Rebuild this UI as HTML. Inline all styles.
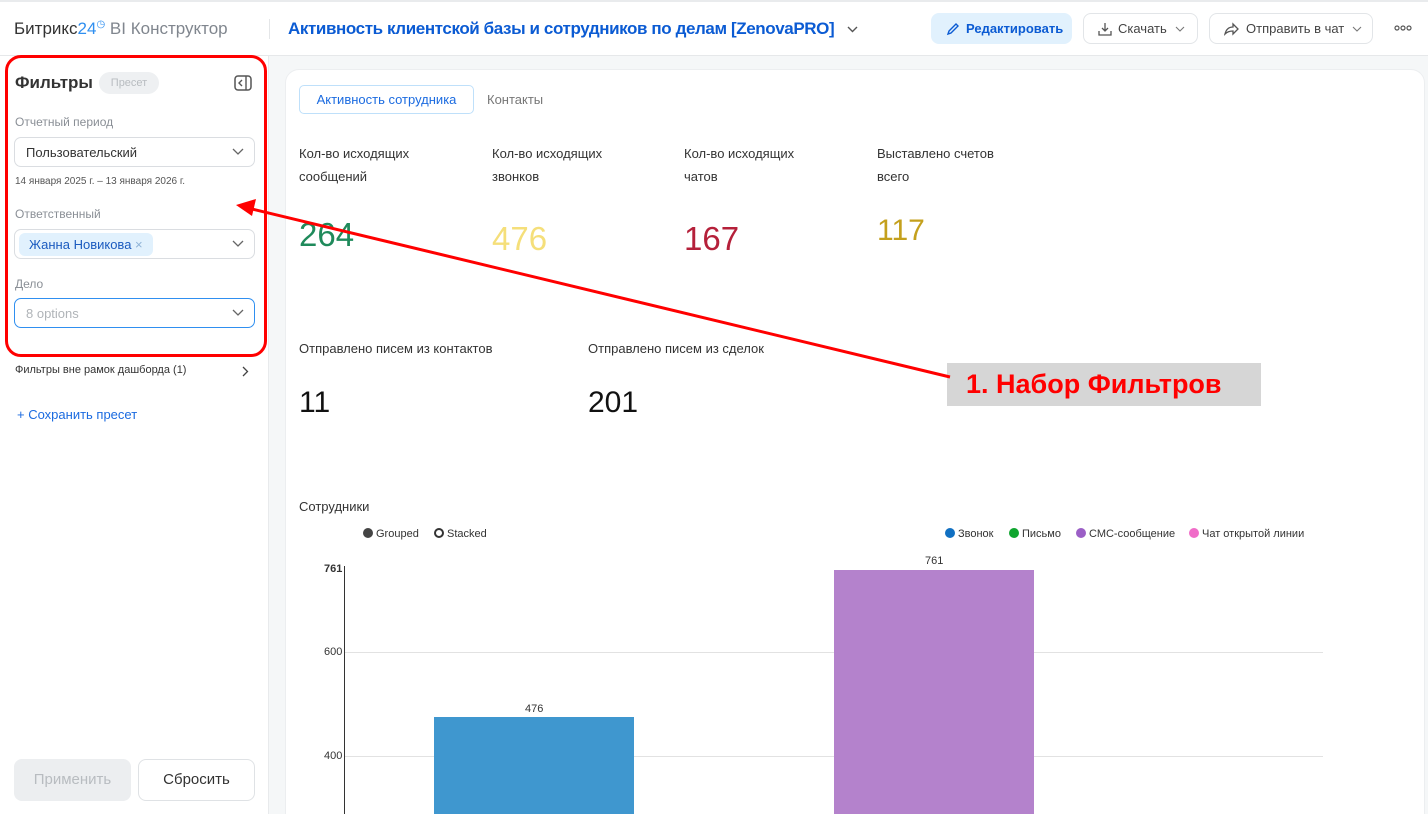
<!DOCTYPE html>
<html><head><meta charset="utf-8"><style>
*{box-sizing:border-box;margin:0;padding:0}
html,body{width:1428px;height:814px;overflow:hidden}
body{font-family:"Liberation Sans","Noto Sans CJK SC",sans-serif;background:#f5f7f8;position:relative;color:#333}
.abs{position:absolute}
.hdr{left:0;top:0;width:1428px;height:56px;background:#fff;border-bottom:1px solid #e6e8ea;border-top:2px solid #e9ebed}
.btn{position:absolute;top:13px;height:31px;border:1px solid #e2e5e8;border-radius:8px;background:#fff;font-size:13px;color:#444;display:flex;align-items:center;padding-left:14px}
.side{left:0;top:56px;width:269px;height:758px;background:#fff;border-right:1px solid #e8eaec}
.lbl{font-size:12px;color:#8a8f96;position:absolute;left:15px}
.sel{position:absolute;left:14px;width:241px;height:30px;border:1px solid #dadde1;border-radius:7px;font-size:13px;color:#333;padding-left:11px;display:flex;align-items:center}
.chev{position:absolute;right:10px;top:10px}
.card{left:285px;top:69px;width:1140px;height:760px;background:#fff;border-radius:14px;border:1px solid #eceef0}
.kt{font-size:13px;color:#333;line-height:23px;position:absolute}
.kv{font-size:33px;position:absolute}
.sm{font-size:11px;color:#333;position:absolute;font-family:"Liberation Sans",sans-serif}
.dot{display:inline-block;width:10px;height:10px;border-radius:50%;vertical-align:-1px;margin-right:3px}
</style></head><body>
<div class="abs hdr"></div>
<div class="abs" style="left:14px;top:19px;font-size:17px;color:#333">Битрикс<span style="color:#2f8ff0">24</span><span style="color:#2f8ff0;font-size:10px;vertical-align:top">◷</span> <span style="color:#80868e">BI Конструктор</span></div>
<div class="abs" style="left:269px;top:19px;width:1px;height:20px;background:#e4e6e8"></div>
<div class="abs" style="left:288px;top:19px;font-size:17px;font-weight:bold;color:#0b5bd3;letter-spacing:-0.4px">Активность клиентской базы и сотрудников по делам [ZenovaPRO]</div>
<svg class="abs" style="left:847px;top:26px" width="11" height="7"><path d="M1 1l4.5 4.5L10 1" fill="none" stroke="#555" stroke-width="1.4"/></svg>
<div class="btn" style="left:931px;width:141px;background:#e1f1fd;border-color:#e1f1fd;color:#0b5bd3;font-weight:bold">
<svg width="14" height="14" viewBox="0 0 14 14" style="margin-right:6px"><path d="M2 12 L3 9 L10 2 L12 4 L5 11 Z" fill="none" stroke="#0b5bd3" stroke-width="1.4"/></svg>Редактировать</div>
<div class="btn" style="left:1083px;width:115px"><svg width="14" height="14" viewBox="0 0 14 14" style="margin-right:6px"><path d="M7 1v8M4 6l3 3 3-3M1 9v4h12V9" fill="none" stroke="#555" stroke-width="1.3"/></svg>Скачать <svg width="10" height="6" style="margin-left:8px"><path d="M1 1l4 4 4-4" fill="none" stroke="#777" stroke-width="1.1"/></svg></div>
<div class="btn" style="left:1209px;width:164px"><svg width="16" height="14" viewBox="0 0 16 14" style="margin-right:6px"><path d="M9 2l5 5-5 5V9C5 9 3 10 1 12c1-4 3-7 8-7z" fill="none" stroke="#555" stroke-width="1.3"/></svg>Отправить в чат <svg width="10" height="6" style="margin-left:8px"><path d="M1 1l4 4 4-4" fill="none" stroke="#777" stroke-width="1.1"/></svg></div>
<svg class="abs" style="left:1394px;top:25px" width="18" height="6"><circle cx="3" cy="3" r="2" fill="none" stroke="#555" stroke-width="1.2"/><circle cx="9" cy="3" r="2" fill="none" stroke="#555" stroke-width="1.2"/><circle cx="15" cy="3" r="2" fill="none" stroke="#555" stroke-width="1.2"/></svg>

<div class="abs side"></div>
<div class="abs" style="left:15px;top:73px;font-size:17px;font-weight:bold;color:#333">Фильтры</div>
<div class="abs" style="left:99px;top:72px;width:60px;height:22px;border-radius:11px;background:#eef0f2;font-size:11px;color:#b8bcc0;text-align:center;line-height:22px">Пресет</div>
<svg class="abs" style="left:234px;top:75px" width="18" height="16"><rect x="1" y="1" width="16" height="14" rx="3" fill="none" stroke="#555" stroke-width="1.5"/><path d="M12 1v14M8 5l-3 3 3 3" fill="none" stroke="#555" stroke-width="1.4"/></svg>
<div class="lbl" style="top:115px">Отчетный период</div>
<div class="sel" style="top:137px">Пользовательский<svg class="chev" width="12" height="8"><path d="M1 1l5 5 5-5" fill="none" stroke="#666" stroke-width="1.3"/></svg></div>
<div class="abs" style="left:15px;top:176px;font-size:10px;color:#555">14 января 2025 г. – 13 января 2026 г.</div>
<div class="lbl" style="top:207px">Ответственный</div>
<div class="sel" style="top:229px;padding-left:4px"><span style="background:#e1f1fd;color:#1b5bbf;border-radius:6px;padding:4px 10px;font-size:13px">Жанна Новикова <span style="color:#8fb3d6">×</span></span><svg class="chev" width="12" height="8"><path d="M1 1l5 5 5-5" fill="none" stroke="#666" stroke-width="1.3"/></svg></div>
<div class="lbl" style="top:277px">Дело</div>
<div class="sel" style="top:298px;border-color:#2f8ff0;color:#b0b4b8">8 options<svg class="chev" width="12" height="8"><path d="M1 1l5 5 5-5" fill="none" stroke="#666" stroke-width="1.3"/></svg></div>
<div class="abs" style="left:5px;top:55px;width:262px;height:302px;border:3px solid #f00;border-radius:16px"></div>
<div class="abs" style="left:15px;top:364px;font-size:11px;color:#333">Фильтры вне рамок дашборда (1)</div>
<svg class="abs" style="left:242px;top:366px" width="7" height="11"><path d="M1 1l4.5 4.5L1 10" fill="none" stroke="#444" stroke-width="1.3"/></svg>
<div class="abs" style="left:17px;top:407px;font-size:13px;color:#1b6be0">+ Сохранить пресет</div>
<div class="abs" style="left:14px;top:759px;width:117px;height:42px;border-radius:8px;background:#eceef0;color:#b8bcc0;font-size:15px;text-align:center;line-height:42px">Применить</div>
<div class="abs" style="left:138px;top:759px;width:117px;height:42px;border-radius:8px;border:1px solid #dfe2e5;color:#333;font-size:15px;text-align:center;line-height:40px">Сбросить</div>

<div class="abs card"></div>
<div class="abs" style="left:299px;top:85px;width:175px;height:29px;border:1px solid #bfe0fa;border-radius:5px;color:#1b6be0;font-size:13px;text-align:center;line-height:27px">Активность сотрудника</div>
<div class="abs" style="left:487px;top:92px;font-size:13px;color:#777">Контакты</div>

<div class="kt" style="left:299px;top:142px">Кол-во исходящих<br>сообщений</div>
<div class="kt" style="left:492px;top:142px">Кол-во исходящих<br>звонков</div>
<div class="kt" style="left:684px;top:142px">Кол-во исходящих<br>чатов</div>
<div class="kt" style="left:877px;top:142px">Выставлено счетов<br>всего</div>
<div class="kv" style="left:299px;top:216px;color:#1f8a5b">264</div>
<div class="kv" style="left:492px;top:220px;color:#f5df7a">476</div>
<div class="kv" style="left:684px;top:220px;color:#b5203a">167</div>
<div class="kv" style="left:877px;top:214px;color:#c4a01d;font-size:30px">117</div>
<div class="kt" style="left:299px;top:337px">Отправлено писем из контактов</div>
<div class="kt" style="left:588px;top:337px">Отправлено писем из сделок</div>
<div class="kv" style="left:299px;top:386px;color:#111;font-size:30px">11</div>
<div class="kv" style="left:588px;top:386px;color:#111;font-size:30px">201</div>

<div class="abs" style="left:947px;top:363px;width:314px;height:43px;background:#d6d6d6"></div>
<div class="abs" style="left:966px;top:369px;font-size:27px;font-weight:bold;color:#f00">1. Набор Фильтров</div>
<svg class="abs" style="left:0;top:0" width="1428" height="814"><line x1="950" y1="377" x2="252" y2="209" stroke="#f00" stroke-width="3"/><path d="M236 205 L256 199 L252 216 Z" fill="#f00"/></svg>

<div class="abs" style="left:299px;top:499px;font-size:13px;color:#333">Сотрудники</div>
<div class="sm" style="left:363px;top:528px"><span class="dot" style="background:#444"></span>Grouped</div>
<div class="sm" style="left:434px;top:528px"><span class="dot" style="border:2px solid #333"></span>Stacked</div>
<div class="sm" style="left:945px;top:528px"><span class="dot" style="background:#1170c2"></span>Звонок</div>
<div class="sm" style="left:1009px;top:528px"><span class="dot" style="background:#0fa52f"></span>Письмо</div>
<div class="sm" style="left:1076px;top:528px"><span class="dot" style="background:#9b5fc6"></span>СМС-сообщение</div>
<div class="sm" style="left:1189px;top:528px"><span class="dot" style="background:#f06cc8"></span>Чат открытой линии</div>

<div class="abs" style="left:344px;top:566px;width:1px;height:248px;background:#333"></div>
<div class="abs" style="left:345px;top:652px;width:978px;height:1px;background:#e2e2e2"></div>
<div class="abs" style="left:345px;top:756px;width:978px;height:1px;background:#e2e2e2"></div>
<div class="sm" style="left:324px;top:563px;font-weight:bold">761</div>
<div class="sm" style="left:324px;top:646px">600</div>
<div class="sm" style="left:324px;top:750px">400</div>
<div class="abs" style="left:434px;top:717px;width:200px;height:97px;background:#3f97cf"></div>
<div class="sm" style="left:525px;top:703px">476</div>
<div class="abs" style="left:834px;top:570px;width:200px;height:244px;background:#b482cc"></div>
<div class="sm" style="left:925px;top:555px">761</div>
</body></html>
